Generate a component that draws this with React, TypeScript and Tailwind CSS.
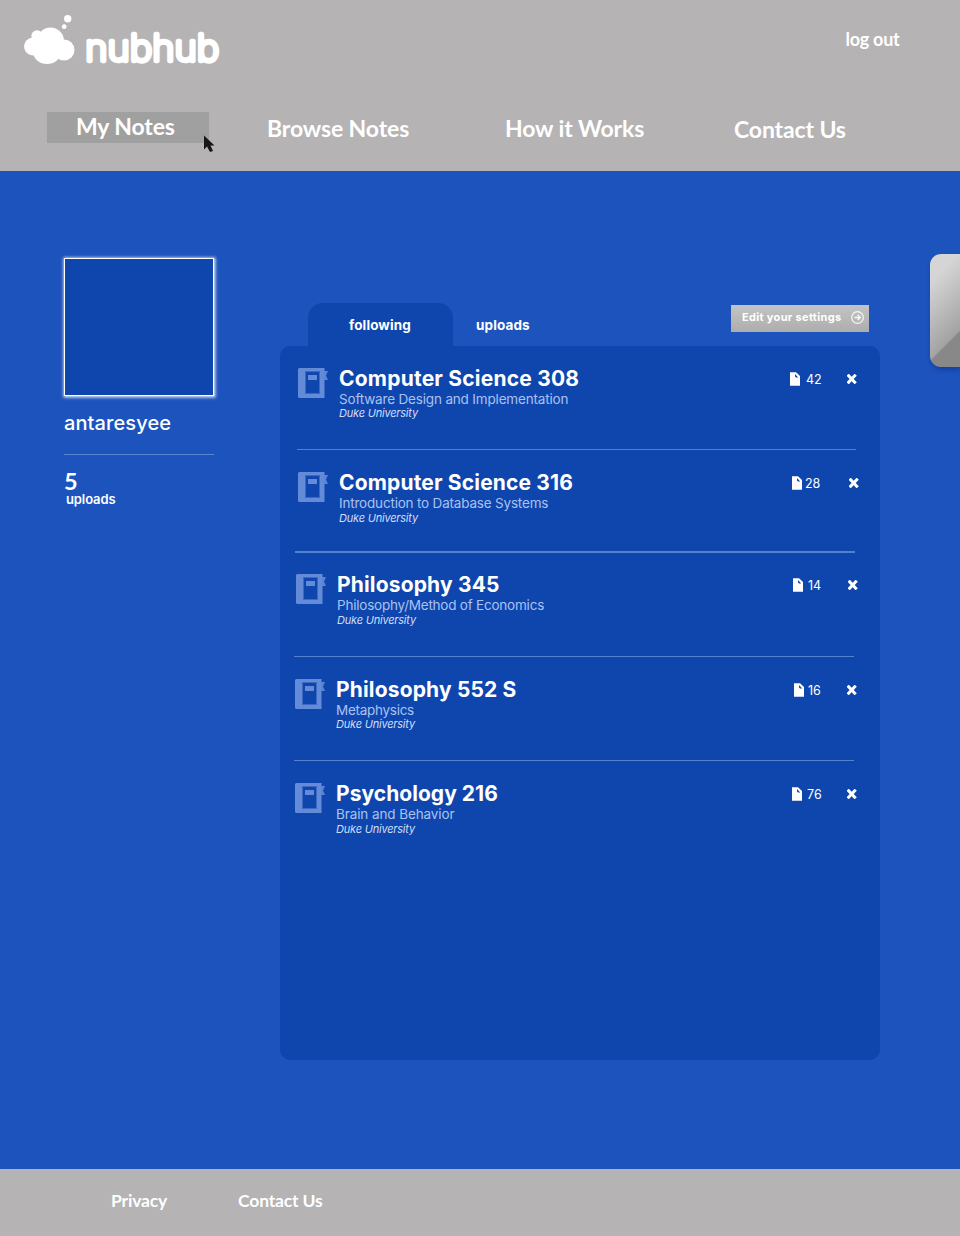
import React from 'react';

type Note = {
  title: string;
  titleClass: string;
  subject: string;
  subjectClass: string;
  count: string;
  row: string;
  body: string;
  school: string;
  number: string;
};

const notes: Note[] = [
  { title: 'Computer Science 308', titleClass: 'tracking-[0.21px]', subject: 'Software Design and Implementation', subjectClass: 'tracking-[-0.17px]', count: '42', row: 'ml-[17px] w-[559px] h-[104px] border-b pl-px pt-[22px]', body: 'w-[451px]', school: '', number: 'ml-[6px] w-[41px]' },
  { title: 'Computer Science 316', titleClass: 'tracking-[0.16px]', subject: 'Introduction to Database Systems', subjectClass: 'tracking-[-0.19px]', count: '28', row: 'ml-[15px] w-[560px] h-[103px] border-b-2 pl-[3px] pt-[22px]', body: 'w-[453px]', school: 'pt-px', number: 'ml-[3px] w-[44px]' },
  { title: 'Philosophy 345', titleClass: 'tracking-[0.16px]', subject: 'Philosophy/Method of Economics', subjectClass: 'tracking-[-0.22px]', count: '14', row: 'ml-[14px] w-[560px] h-[104px] border-b pl-[2px] pt-[21px]', body: 'w-[456px]', school: 'pt-px', number: 'ml-[5px] w-[40px]' },
  { title: 'Philosophy 552 S', titleClass: 'tracking-[0.16px]', subject: 'Metaphysics', subjectClass: 'tracking-[-0.28px]', count: '16', row: 'ml-[14px] w-[560px] h-[104px] border-b pl-px pt-[22px]', body: 'w-[458px]', school: '', number: 'ml-[4px] w-[39px]' },
  { title: 'Psychology 216', titleClass: 'tracking-[0.04px]', subject: 'Brain and Behavior', subjectClass: 'tracking-[-0.1px]', count: '76', row: 'ml-[14px] w-[560px] h-[104px] pl-px pt-[22px]', body: 'w-[456px]', school: 'pt-px', number: 'ml-[5px] w-[40px]' },
];

function Logo() {
  return (
    <svg width="206" height="60" viewBox="0 0 206 60" className="block overflow-visible" fill="white">
      <circle cx="43.7" cy="3.7" r="3.7" />
      <circle cx="40.2" cy="11.7" r="2.4" />
      <circle cx="9" cy="31.5" r="9" />
      <circle cx="13" cy="21" r="5.7" />
      <circle cx="26.5" cy="26" r="13.5" />
      <circle cx="40" cy="35" r="10.5" />
      <ellipse cx="23" cy="38" rx="13.5" ry="11" />
      <text x="61.3" y="46" textLength="134" lengthAdjust="spacingAndGlyphs" fontFamily="Inter, sans-serif" fontSize="36.5" fontWeight="200" stroke="white" strokeWidth="4.3" strokeLinejoin="round" strokeLinecap="round">nubhub</text>
    </svg>
  );
}

function Cursor() {
  return (
    <svg width="11" height="18" viewBox="0 0 11 18" className="absolute left-[204px] top-[135px]">
      <path d="M0 0.5V14.5L3 11.5L6 17L9 16L6.5 10.5H10.5Z" fill="#171717" />
    </svg>
  );
}

function BookIcon() {
  return (
    <svg width="30" height="31" viewBox="0 0 30 31" className="shrink-0">
      <path fill="#648bd8" fillRule="evenodd" d="M1 0H26.5V30H1L0 29V1ZM8 4V26H21V4Z" />
      <path fill="#3d69c5" fillRule="evenodd" d="M7 3H22V26H7ZM8 4V25H21V4Z" />
      <path fill="#648bd8" d="M10 7H19V12H10Z" />
      <path fill="#5c84d4" d="M26 3H30L28 7.5L30 12H26Z" />
    </svg>
  );
}

function FileIcon() {
  return (
    <svg width="10" height="14" viewBox="0 0 10 14" className="mt-1 shrink-0">
      <path fill="white" d="M0 0.3H6L10 4V13.7H0Z" />
      <path fill="#0f46ad" d="M5 2L8.2 5.4H6L5 4.4Z" />
    </svg>
  );
}

function CloseIcon() {
  return (
    <svg width="10" height="10" viewBox="0 0 10 10" className="mt-[6px] shrink-0">
      <path d="M1.7 1.8L7.7 8.2M7.7 1.8L1.7 8.2" stroke="white" strokeWidth="3" strokeLinecap="square" />
    </svg>
  );
}

export default function App() {
  return (
    <div className="relative flex h-[1236px] w-[960px] flex-col overflow-hidden bg-[#1d53bd] font-['Inter',sans-serif] text-white">
      <header className="h-[171px] shrink-0 bg-[#b5b3b4] font-['Lato',sans-serif] font-bold">
        <div className="flex h-[112px] items-start pl-6 pt-[15px]">
          <Logo />
          <a className="ml-[615.5px] mt-[12px] text-[18px] leading-6 tracking-[-0.25px]">log out</a>
        </div>
        <nav className="flex items-start whitespace-nowrap text-[23px] leading-[29px] tracking-[-0.13px]">
          <a className="ml-[47px] h-[31px] w-[162px] bg-[#a1a0a0] pl-[29px]">My Notes</a>
          <a className="ml-[58px] mt-[2px] w-[238px]">Browse Notes</a>
          <a className="mt-[2px] w-[229px]">How it Works</a>
          <a className="mt-[3px]">Contact Us</a>
        </nav>
      </header>
      <Cursor />

      <main className="flex h-[998px] shrink-0 items-start">
        <aside className="ml-16 mt-[87px] w-[216px]">
          <div className="h-[138px] w-[150px] border border-white bg-[#0f46ad] shadow-[0_0_3px_1.5px_rgba(255,255,255,0.85)]" />
          <div className="mt-[14px] h-[45px] w-[150px] border-b border-[#5e86cf] text-[20px] font-medium leading-[26px] tracking-[0.1px]">antaresyee</div>
          <div className="mt-[15px] font-['Lato',sans-serif] text-[23.5px] font-bold leading-[23px]">5</div>
          <div className="ml-[2px] text-[13px] font-semibold leading-[12px] tracking-[-0.1px]">uploads</div>
        </aside>

        <section className="mt-[132px] w-[600px]">
          <div className="flex h-[43px] items-start pl-7 text-[13.5px] font-bold leading-[18px] tracking-[0.12px]">
            <div className="h-[43px] w-[145px] rounded-t-[15px] bg-[#0f46ad] pl-[41px] pt-[13px]">following</div>
            <div className="ml-[23px] mt-[13px] w-[255px]">uploads</div>
            <button className="mt-[2px] flex h-[27px] w-[138px] items-start whitespace-nowrap bg-gradient-to-b from-[#c4c4c4] to-[#adadad] pl-[11px] pt-[5px] text-[11px] font-bold leading-[14px] tracking-[0.32px]">
              <span className="w-[109px] text-left">Edit your settings</span>
              <svg width="13" height="13" viewBox="0 0 13 13" fill="none" stroke="white" className="mt-[0.5px] opacity-90">
                <circle cx="6.5" cy="6.5" r="5.8" strokeWidth="1.2" />
                <path d="M3.5 6.5H9M6.7 4L9.2 6.5L6.7 9" strokeWidth="1.5" />
              </svg>
            </button>
          </div>
          <div className="h-[714px] rounded-[10px] bg-[#0f46ad]">
            {notes.map((n) => (
              <article key={n.title} className={`flex items-start whitespace-nowrap border-[#5580cf] ${n.row}`}>
                <BookIcon />
                <div className={`ml-[11px] shrink-0 ${n.body}`}>
                  <h2 className={`-mt-[2px] text-[21px] font-bold leading-[25px] ${n.titleClass}`}>{n.title}</h2>
                  <p className={`text-[13.5px] leading-4 text-[#a9c2f2] ${n.subjectClass}`}>{n.subject}</p>
                  <p className={`text-[11px] italic leading-3 tracking-[-0.2px] text-[#d0defa] ${n.school}`}>Duke University</p>
                </div>
                <FileIcon />
                <span className={`mt-1 shrink-0 text-[12.5px] leading-4 ${n.number}`}>{n.count}</span>
                <CloseIcon />
              </article>
            ))}
          </div>
        </section>

        <div className="ml-[50px] mt-[83px] h-[113px] w-[30px] rounded-l-[11px] bg-[linear-gradient(135deg,#d5d5d5_20%,#a3a3a3_74%,#888888_75.5%)] shadow-[1px_3px_5px_rgba(0,20,90,0.3)]" />
      </main>

      <footer className="flex h-[67px] shrink-0 items-start bg-[#b5b3b4] pl-[111px] pt-5 font-['Lato',sans-serif] text-[17.5px] font-bold leading-6 tracking-[-0.15px]">
        <a className="w-[127px]">Privacy</a>
        <a>Contact Us</a>
      </footer>
    </div>
  );
}
